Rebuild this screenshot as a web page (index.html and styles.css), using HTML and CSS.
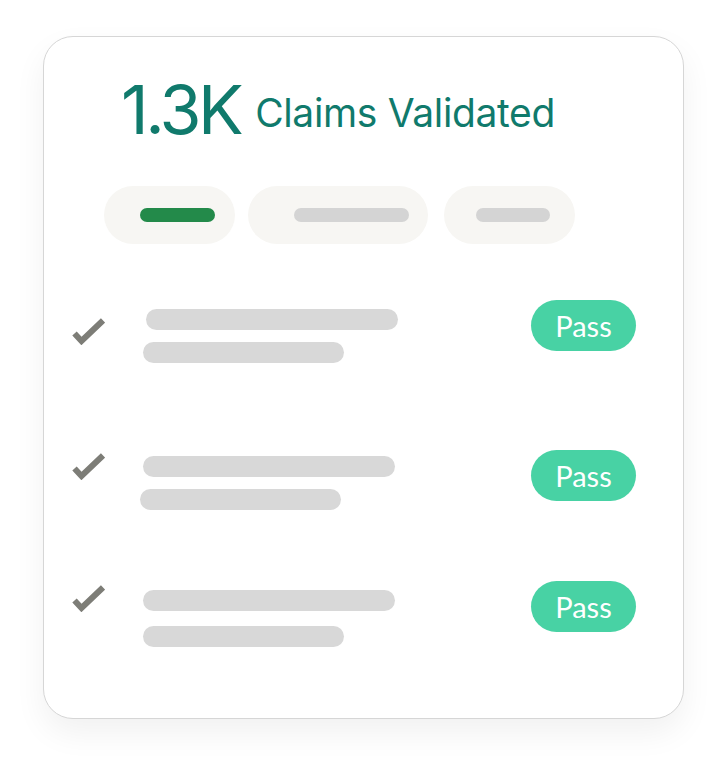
FILE: index.html
```html
<!DOCTYPE html>
<html>
<head>
<meta charset="utf-8">
<link rel="stylesheet" href="styles.css">
</head>
<body>
<div class="card">
  <div class="header"><span class="big">1.3K</span><span class="label">Claims Validated</span></div>
  <div class="tabs">
    <div class="tab tab-1"><span class="tab-bar active w75"></span></div>
    <div class="tab tab-2"><span class="tab-bar w115"></span></div>
    <div class="tab tab-3"><span class="tab-bar w74"></span></div>
  </div>
  <div class="row row-1">
    <svg class="check" viewBox="0 0 33 27" width="33" height="27"><path d="M2.5 15.5 L9.5 23 L31 2.5" fill="none" stroke="#7d7d77" stroke-width="6"/></svg>
    <div class="lines"><span class="line l1"></span><span class="line l2"></span></div>
    <span class="pass">Pass</span>
  </div>
  <div class="row row-2">
    <svg class="check" viewBox="0 0 33 27" width="33" height="27"><path d="M2.5 15.5 L9.5 23 L31 2.5" fill="none" stroke="#7d7d77" stroke-width="6"/></svg>
    <div class="lines"><span class="line l1"></span><span class="line l2"></span></div>
    <span class="pass">Pass</span>
  </div>
  <div class="row row-3">
    <svg class="check" viewBox="0 0 33 27" width="33" height="27"><path d="M2.5 15.5 L9.5 23 L31 2.5" fill="none" stroke="#7d7d77" stroke-width="6"/></svg>
    <div class="lines"><span class="line l1"></span><span class="line l2"></span></div>
    <span class="pass">Pass</span>
  </div>
</div>
</body>
</html>
```
FILE: styles.css
```css
html, body {
  margin: 0;
  padding: 0;
  background: #ffffff;
}
body {
  padding: 36px 0 0 43px;
  width: 723px;
  height: 765px;
  box-sizing: border-box;
  overflow: hidden;
}
.card {
  width: 641px;
  height: 683px;
  box-sizing: border-box;
  border: 1.5px solid #d6d6d6;
  border-radius: 30px;
  background: #ffffff;
  box-shadow: 0 14px 32px rgba(0, 0, 0, 0.06);
}
.header {
  padding-left: 77px;
  margin-top: 31px;
  height: 82px;
  line-height: 82px;
  white-space: nowrap;
  font-family: Inter, "DejaVu Sans", sans-serif;
  color: #107a6c;
}
.big {
  font-size: 68px;
  letter-spacing: -3.5px;
  vertical-align: baseline;
}
.label {
  font-size: 39px;
  margin-left: 15px;
  letter-spacing: -0.35px;
  vertical-align: 7px;
}
.tabs {
  display: flex;
  margin-top: 36px;
  padding-left: 60px;
}
.tab {
  height: 58px;
  border-radius: 29px;
  background: #f7f6f3;
  display: flex;
  align-items: center;
  box-sizing: border-box;
}
.tab-1 { width: 131px; padding-left: 36px; }
.tab-2 { width: 180px; padding-left: 46px; margin-left: 13px; }
.tab-3 { width: 131px; padding-left: 32px; margin-left: 16px; }
.tab-bar {
  display: block;
  height: 14px;
  border-radius: 7px;
  background: #d4d4d4;
}
.tab-bar.active { background: #238a4a; }
.w75 { width: 75px; }
.w115 { width: 115px; }
.w74 { width: 74px; }
.row {
  display: flex;
  align-items: flex-start;
  padding-left: 28px;
  padding-right: 47px;
}
.check {
  display: block;
  flex: none;
}
.lines {
  display: flex;
  flex-direction: column;
  gap: 12px;
  margin-left: 38px;
  flex: 1;
}
.line {
  display: block;
  height: 21px;
  border-radius: 11px;
  background: #d8d8d8;
}
.l1 { width: 252px; }
.l2 { width: 201px; }
.pass {
  flex: none;
  width: 105px;
  height: 51px;
  border-radius: 26px;
  background: #48d2a4;
  color: #ffffff;
  font-family: Lato, "Open Sans", sans-serif;
  font-size: 29px;
  line-height: 51px;
  text-align: center;
}
.row-1 { margin-top: 56px; }
.row-1 .check { margin-top: 18px; }
.row-1 .lines { margin-top: 9px; }
.row-1 .l1 { margin-left: 3px; }
.row-2 { margin-top: 87px; }
.row-2 .check { margin-top: 3px; }
.row-2 .lines { margin-top: 6px; }
.row-2 .l2 { margin-left: -3px; }
.row-3 { margin-top: 71px; }
.row-3 .check { margin-top: 4px; }
.row-3 .lines { margin-top: 9px; gap: 15px; }
```
